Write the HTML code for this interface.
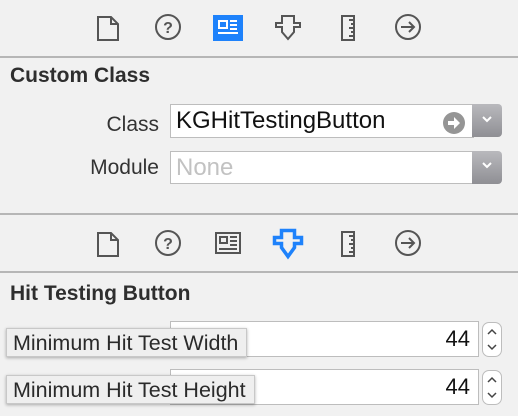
<!DOCTYPE html>
<html><head><style>
body{margin:0;width:518px;height:416px;background:#f1f1f1;position:relative;overflow:hidden;font-family:"Liberation Sans",sans-serif;}
.a{position:absolute;}
.line{position:absolute;left:0;width:518px;height:2px;background:#b6b6b6;}
.h{font-weight:bold;font-size:21px;color:#2e2e2e;}
.lbl{font-size:21px;color:#333;text-align:right;}
.field{background:#fff;border:1px solid #bdbdbd;box-sizing:border-box;}
.btn{background:linear-gradient(#b9b9bd,#8f8f94);border-radius:0 4px 4px 0;}
.tip{background:#efefef;border:1px solid #c8c8c8;box-shadow:0 1px 3px rgba(0,0,0,.3);font-size:21.5px;color:#2a2a2a;box-sizing:border-box;padding:2px 0 0 6px;white-space:nowrap;}
.step{border:1px solid #bdbdbd;border-radius:7px;background:#fff;box-sizing:border-box;}
</style></head><body>
<svg class="a" style="left:0;top:0" width="518" height="60" fill="none" stroke="#555" stroke-width="2">
<path d="M98 17h13l7 7v16h-20z M111 17v7h7"/>
<circle cx="168" cy="27" r="12"/><text x="168" y="33" font-size="16" font-weight="bold" fill="#555" stroke="none" text-anchor="middle" font-family="Liberation Sans">?</text>
<rect x="213" y="15" width="30" height="26" fill="#1e82fb" stroke="none"/>
<g stroke="#fff"><rect x="219" y="21" width="8" height="7"/><path d="M230 21h7M230 25h7M230 29h7M218 33h20"/></g>
<path d="M282 16h12v7h6v4h-6v5l-6 7l-6-7v-5h-6v-4h6z"/>
<path d="M342 16h12v24h-12z M349 20h5M351 24h3M349 28h5M351 32h3M349 36h5"/>
<circle cx="408" cy="27" r="12"/><path d="M401 27h13M409 22l5 5l-5 5"/>
</svg>
<div class="line" style="top:56px"></div>
<div class="a h" style="left:10px;top:64px">Custom Class</div>
<div class="a lbl" style="left:40px;width:119px;top:113px">Class</div>
<div class="a field" style="left:170px;top:104px;width:304px;height:34px"></div>
<div class="a" style="left:176px;top:107px;font-size:24px;color:#111">KGHitTestingButton</div>
<svg class="a" style="left:442px;top:111px" width="24" height="24"><circle cx="12" cy="12" r="11" fill="#959595"/><path d="M6 10h6v-4l6 6l-6 6v-4h-6z" fill="#fff"/></svg>
<div class="a btn" style="left:472px;top:104px;width:30px;height:33px"></div>
<svg class="a" style="left:480px;top:114px" width="14" height="12"><path d="M3 3l4 4l4-4" stroke="#fff" stroke-width="2" fill="none"/></svg>
<div class="a lbl" style="left:40px;width:119px;top:156px">Module</div>
<div class="a field" style="left:170px;top:151px;width:304px;height:33px"></div>
<div class="a" style="left:176px;top:154px;font-size:24px;color:#c2c2c2">None</div>
<div class="a btn" style="left:472px;top:151px;width:30px;height:33px"></div>
<svg class="a" style="left:480px;top:160px" width="14" height="12"><path d="M3 3l4 4l4-4" stroke="#fff" stroke-width="2" fill="none"/></svg>
<div class="line" style="top:213px"></div>
<svg class="a" style="left:0;top:216px" width="518" height="56" fill="none" stroke="#555" stroke-width="2">
<path d="M98 17h13l7 7v16h-20z M111 17v7h7"/>
<circle cx="168" cy="27" r="12"/><text x="168" y="33" font-size="16" font-weight="bold" fill="#555" stroke="none" text-anchor="middle" font-family="Liberation Sans">?</text>
<rect x="216" y="17" width="24" height="20"/><rect x="220" y="21" width="7" height="6"/><path d="M230 21h7M230 25h7M230 29h7M219 33h18"/>
<path d="M281.5 14.5h13v7h7v6h-7v4l-6.5 9l-6.5-9v-4h-7v-6h7z" stroke="#1e82fb" stroke-width="3.5" stroke-linejoin="miter"/>
<path d="M342 16h12v24h-12z M349 20h5M351 24h3M349 28h5M351 32h3M349 36h5"/>
<circle cx="408" cy="27" r="12"/><path d="M401 27h13M409 22l5 5l-5 5"/>
</svg>
<div class="line" style="top:271px"></div>
<div class="a h" style="left:10px;top:282px">Hit Testing Button</div>
<div class="a field" style="left:170px;top:321px;width:309px;height:36px"></div>
<div class="a" style="left:420px;top:326px;font-size:22px;color:#111;width:50px;text-align:right">44</div>
<div class="a step" style="left:482px;top:322px;width:20px;height:35px"></div>
<svg class="a" style="left:482px;top:322px" width="20" height="35" fill="none" stroke="#444" stroke-width="1.5"><path d="M6 12l4-4l4 4M6 23l4 4l4-4"/></svg>
<div class="a tip" style="left:6px;top:328px;width:241px;height:29px">Minimum Hit Test Width</div>
<div class="a field" style="left:170px;top:369px;width:309px;height:36px"></div>
<div class="a" style="left:420px;top:374px;font-size:22px;color:#111;width:50px;text-align:right">44</div>
<div class="a step" style="left:482px;top:370px;width:20px;height:35px"></div>
<svg class="a" style="left:482px;top:370px" width="20" height="35" fill="none" stroke="#444" stroke-width="1.5"><path d="M6 12l4-4l4 4M6 23l4 4l4-4"/></svg>
<div class="a tip" style="left:6px;top:375px;width:249px;height:29px">Minimum Hit Test Height</div>
</body></html>
